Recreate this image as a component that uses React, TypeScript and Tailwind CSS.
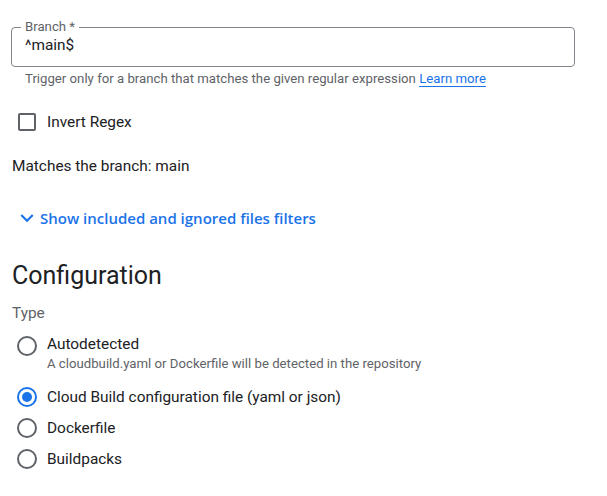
import React from 'react';

const RadioRow = ({ label, checked = false }: { label: string; checked?: boolean }) => (
    <div className="flex items-center h-5">
        <span
            className={`ml-[5px] w-5 h-5 rounded-full border-2 flex items-center justify-center ${
                checked ? 'border-[#1a73e8]' : 'border-[#5f6368]'
            }`}
        >
            {checked && <span className="w-2.5 h-2.5 rounded-full bg-[#1a73e8]" />}
        </span>
        <span className="ml-[10px] text-[15.4px] leading-5 text-[#202124]">{label}</span>
    </div>
);

const App = () => {
    return (
        <div className="w-[607px] h-[496px] bg-white overflow-hidden px-3 pt-[19px] font-['Roboto',sans-serif] text-[#202124]">
            <fieldset className="-ml-px w-[564px] h-[48px] border border-[#80868b] rounded pl-[9px]">
                <legend className="px-1 text-[13.2px] leading-4 text-[#5f6368]">Branch *</legend>
                <div className="ml-1 text-[15.4px] leading-5 text-[#202124]">^main$</div>
            </fieldset>

            <p className="mt-1 pl-[13px] text-[13.2px] leading-4 text-[#5f6368]">
                Trigger only for a branch that matches the given regular expression{' '}
                <a className="text-[#1a73e8] underline underline-offset-[3px] decoration-[#1a73e8]">Learn more</a>
            </p>

            <div className="mt-[15px] h-10 flex items-center">
                <span className="ml-[6px] w-[18px] h-[18px] border-2 border-[#5f6368] rounded-[2px]" />
                <span className="ml-[11px] text-[15.4px] leading-5">Invert Regex</span>
            </div>

            <p className="mt-[14px] text-[15.4px] leading-5">Matches the branch: main</p>

            <div className="mt-8 flex items-center h-5 text-[#1a73e8]">
                <svg className="ml-[2px] w-[26px] h-[26px] shrink-0" viewBox="0 0 24 24" fill="currentColor">
                    <path d="M16.59 8.59L12 13.17 7.41 8.59 6 10l6 6 6-6z" />
                </svg>
                <span className="text-[15px] leading-5 font-semibold font-['Open_Sans',sans-serif]">
                    Show included and ignored files filters
                </span>
            </div>

            <h2 className="mt-8 text-[25px] leading-8 font-normal">Configuration</h2>

            <p className="mt-[11px] text-[15.4px] leading-5 text-[#5f6368]">Type</p>

            <div className="mt-[11px] flex items-start">
                <span className="ml-[5px] mt-[2px] w-5 h-5 rounded-full border-2 border-[#5f6368]" />
                <div className="ml-[10px]">
                    <div className="text-[15.4px] leading-5">Autodetected</div>
                    <div className="mt-0.5 text-[13.2px] leading-4 text-[#5f6368]">
                        A cloudbuild.yaml or Dockerfile will be detected in the repository
                    </div>
                </div>
            </div>

            <div className="mt-[15px] flex flex-col gap-[11px]">
                <RadioRow label="Cloud Build configuration file (yaml or json)" checked />
                <RadioRow label="Dockerfile" />
                <RadioRow label="Buildpacks" />
            </div>
        </div>
    );
};

export default App;
